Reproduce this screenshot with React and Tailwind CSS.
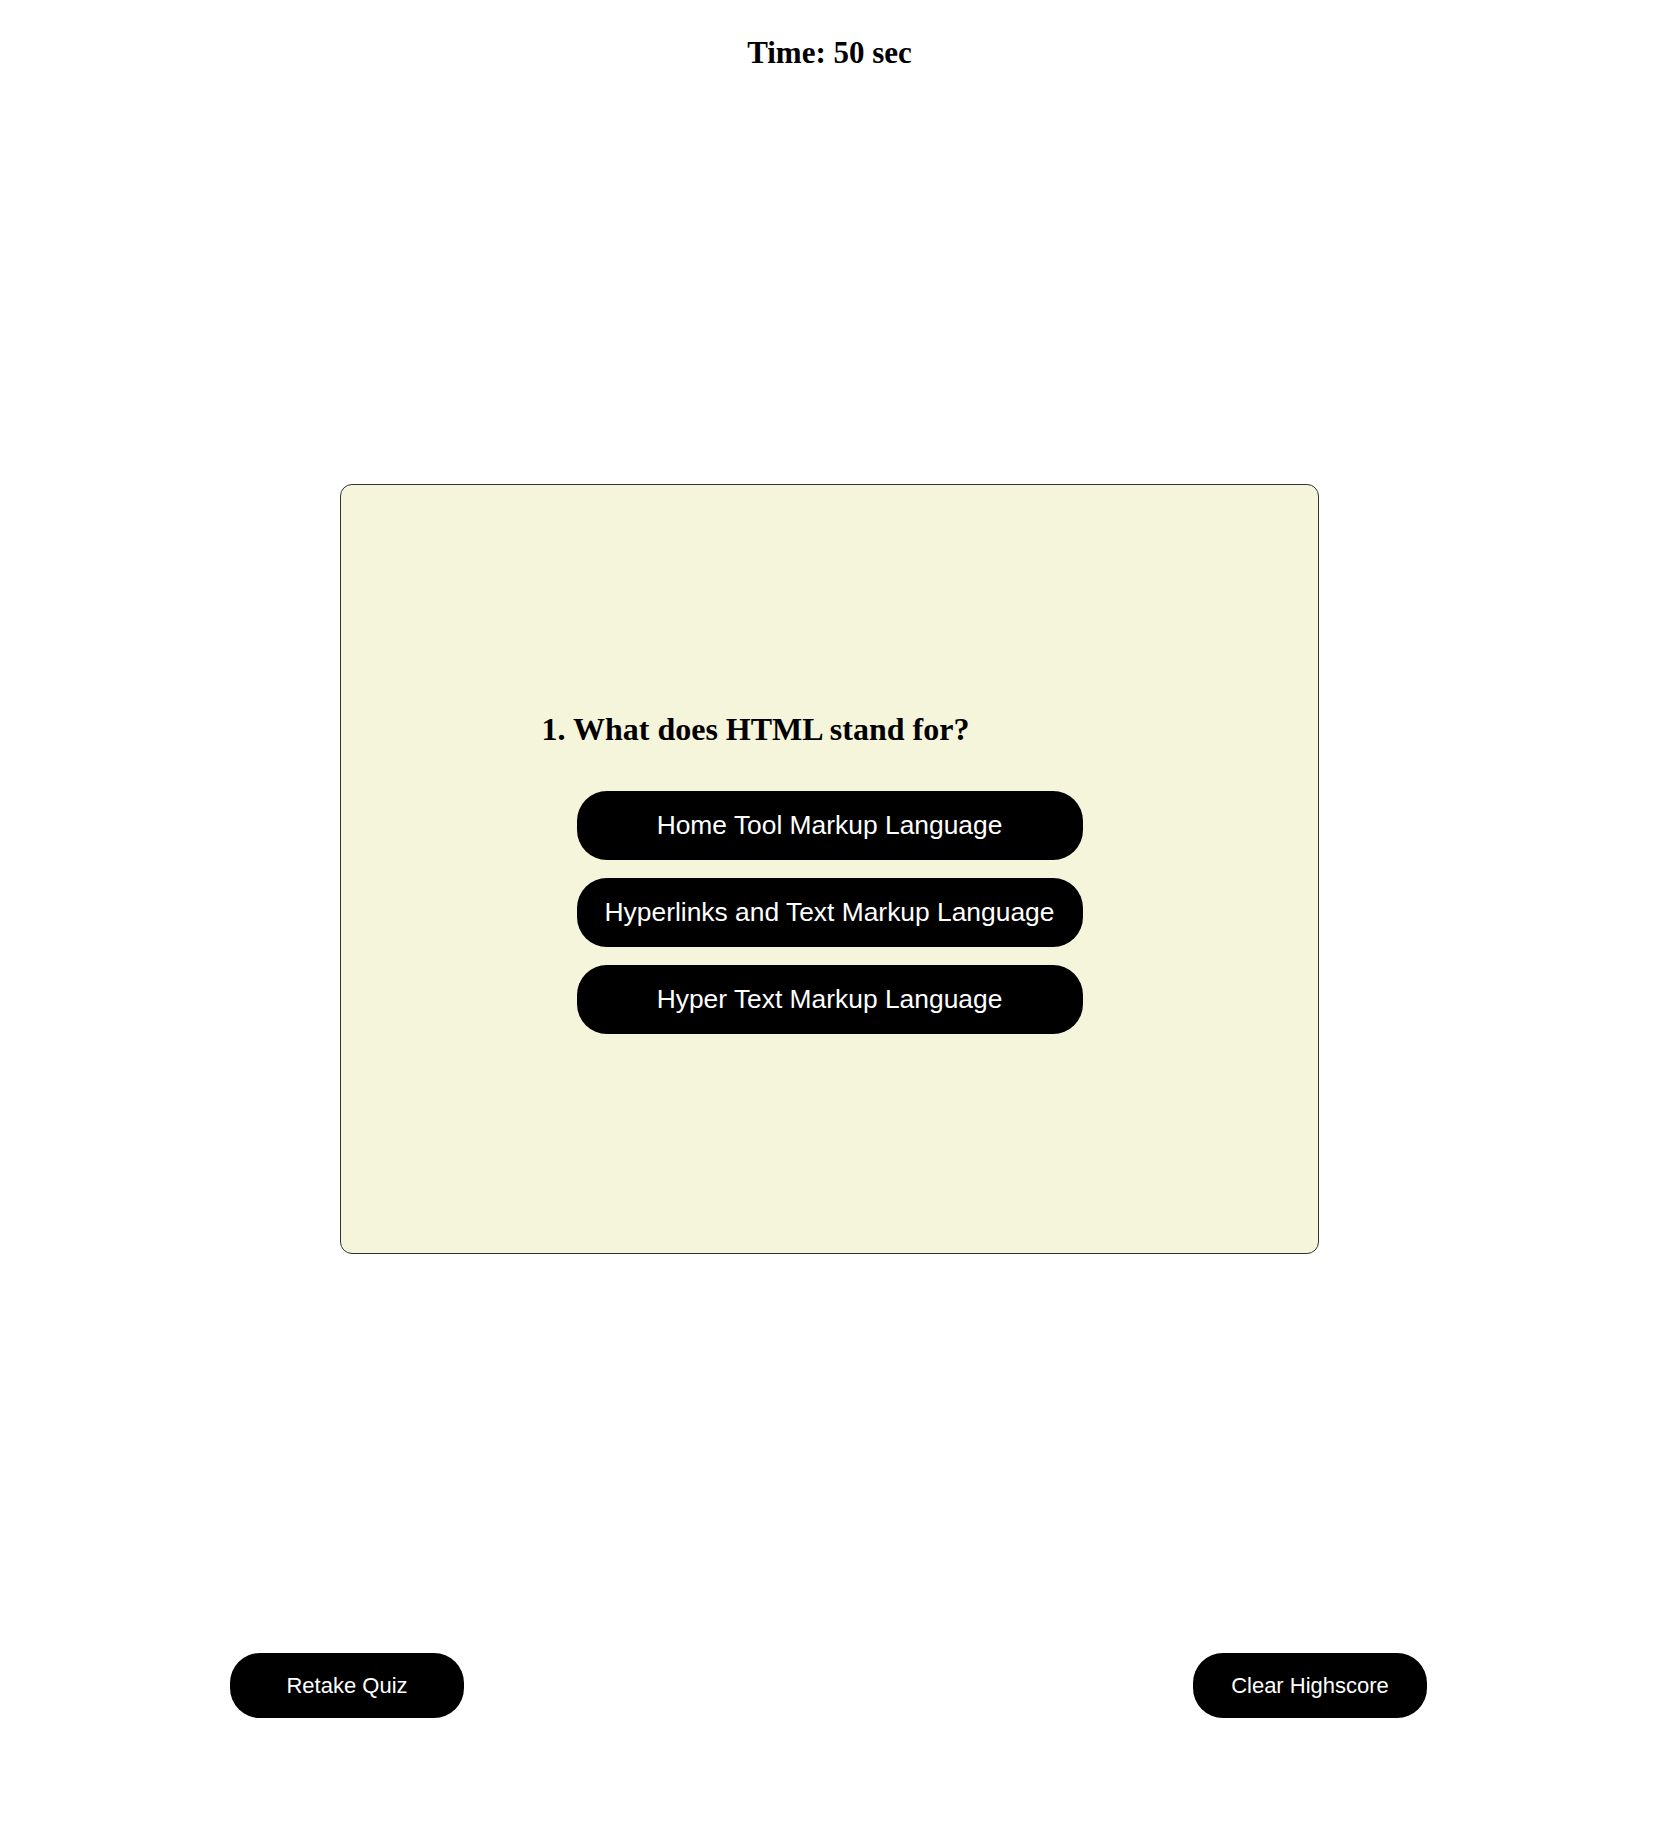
import React from "react";

const answers = [
  "Home Tool Markup Language",
  "Hyperlinks and Text Markup Language",
  "Hyper Text Markup Language",
];

export default function App() {
  return (
    <div className="w-[1659px] min-h-[1825px] bg-white font-['Liberation_Serif',serif] text-black">
      <div className="pt-[35px] text-center text-[31px] font-bold leading-[36px]">Time: 50 sec</div>

      <div className="mx-auto mt-[413px] h-[770px] w-[979px] rounded-[12px] border border-[#333] bg-[#f5f5dc]">
        <div className="mx-auto w-[576px] pt-[226px]">
          <h2 className="text-[32px] font-bold leading-[36px]">1. What does HTML stand for?</h2>
          <div className="mt-[44px] flex flex-col items-center gap-[18px]">
            {answers.map((a) => (
              <button
                key={a}
                className="h-[69px] w-[506px] rounded-[30px] bg-black font-['Liberation_Sans',Arial,sans-serif] text-[26.4px] text-white"
              >
                {a}
              </button>
            ))}
          </div>
        </div>
      </div>

      <div className="mt-[399px] flex justify-between pl-[230px] pr-[232px]">
        <button className="h-[65px] w-[234px] rounded-[30px] bg-black font-['Liberation_Sans',Arial,sans-serif] text-[22px] text-white">
          Retake Quiz
        </button>
        <button className="h-[65px] w-[234px] rounded-[30px] bg-black font-['Liberation_Sans',Arial,sans-serif] text-[22px] text-white">
          Clear Highscore
        </button>
      </div>
    </div>
  );
}
